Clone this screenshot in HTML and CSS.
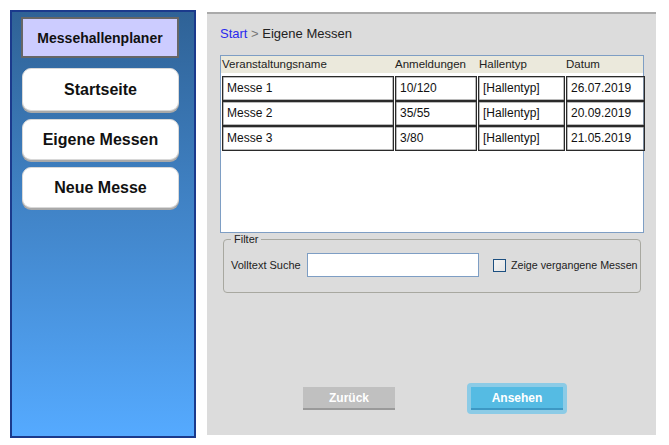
FILE: index.html
```html
<!DOCTYPE html>
<html lang="de">
<head>
<meta charset="utf-8">
<title>Messehallenplaner</title>
<link rel="stylesheet" href="styles.css">
</head>
<body>
<div class="app">
  <nav class="sidebar">
    <div class="brand">Messehallenplaner</div>
    <div class="nav-btn nav-first">Startseite</div>
    <div class="nav-btn">Eigene Messen</div>
    <div class="nav-btn">Neue Messe</div>
  </nav>
  <main class="panel">
    <div class="crumbs"><span class="crumb-link">Start</span><span class="crumb-sep"> &gt; </span><span class="crumb-cur">Eigene Messen</span></div>
    <div class="table">
      <div class="thead">
        <div class="th">Veranstaltungsname</div>
        <div class="th">Anmeldungen</div>
        <div class="th">Hallentyp</div>
        <div class="th">Datum</div>
      </div>
      <div class="tbody">
        <div class="td">Messe 1</div><div class="td">10/120</div><div class="td">[Hallentyp]</div><div class="td">26.07.2019</div>
        <div class="td">Messe 2</div><div class="td">35/55</div><div class="td">[Hallentyp]</div><div class="td">20.09.2019</div>
        <div class="td">Messe 3</div><div class="td">3/80</div><div class="td">[Hallentyp]</div><div class="td">21.05.2019</div>
      </div>
    </div>
    <fieldset class="filter">
      <legend class="filter-legend">Filter</legend>
      <div class="filter-row">
        <span class="filter-label">Volltext Suche</span>
        <span class="search"></span>
        <span class="check"></span>
        <span class="check-label">Zeige vergangene Messen</span>
      </div>
    </fieldset>
    <div class="actions">
      <div class="btn btn-back">Zurück</div>
      <div class="btn-glow"><div class="btn btn-view">Ansehen</div></div>
    </div>
  </main>
</div>
</body>
</html>
```
FILE: styles.css
```css
html, body {
  margin: 0;
  padding: 0;
  background: #ffffff;
}
body {
  font-family: "Liberation Sans", Arial, sans-serif;
}
.app {
  display: flex;
  align-items: flex-start;
  padding: 10px 0 0 10px;
}
.sidebar {
  box-sizing: border-box;
  width: 186px;
  height: 428px;
  border: 2px solid #1b3a8c;
  background: linear-gradient(#2f6296, #55aaff);
  padding: 5px 0 0 9px;
  display: flex;
  flex-direction: column;
}
.brand {
  box-sizing: border-box;
  width: 158px;
  height: 41px;
  background: #ccccff;
  border: 2px solid #666666;
  display: flex;
  align-items: center;
  justify-content: center;
  font-weight: bold;
  font-size: 14px;
  color: #111;
  margin-bottom: 10px;
}
.nav-btn {
  box-sizing: border-box;
  width: 157px;
  height: 41px;
  margin-left: 1px;
  margin-bottom: 7px;
  background: #ffffff;
  border-radius: 9px;
  border: 1px solid #d8d8d8;
  box-shadow: 0 2px 0 #a9a9a9;
  display: flex;
  align-items: center;
  justify-content: center;
  font-weight: bold;
  font-size: 16px;
  color: #111;
}
.nav-first {
  height: 43px;
  margin-bottom: 8px;
}
.panel {
  box-sizing: border-box;
  margin-left: 11px;
  margin-top: 2px;
  width: 449px;
  height: 423px;
  background: #dcdcdc;
  border-top: 2px solid #aaaaaa;
  padding: 12px 0 0 13px;
  display: flex;
  flex-direction: column;
}
.crumbs {
  font-size: 13px;
  line-height: 16px;
  color: #222;
}
.crumb-link { color: #2a2aee; }
.crumb-sep { color: #777; }
.table {
  box-sizing: border-box;
  margin-top: 13px;
  width: 424px;
  height: 178px;
  background: #ffffff;
  border: 1px solid #7e9ec4;
}
.thead {
  display: grid;
  grid-template-columns: 173px 84px 87px 78px;
  height: 17px;
  background: #ebe9dc;
  font-size: 11.5px;
  line-height: 16px;
  color: #222;
}
.th {
  padding-left: 1px;
  white-space: nowrap;
}
.tbody {
  display: grid;
  grid-template-columns: 172px 82px 87px 79px;
  grid-auto-rows: 25px;
  column-gap: 1px;
  margin-top: 3px;
  padding-left: 1px;
}
.td {
  box-sizing: border-box;
  border: 1px solid #2a2a2a;
  box-shadow: inset 0 0 0 0.5px #777;
  font-size: 12px;
  line-height: 23px;
  padding-left: 4px;
  color: #111;
  white-space: nowrap;
}
.filter {
  box-sizing: border-box;
  margin: 0 0 0 3px;
  width: 418px;
  height: 60px;
  border: 1px solid #a8a8a0;
  border-radius: 4px;
  padding: 0 0 0 7px;
  min-width: 0;
}
.filter-legend {
  font-size: 11px;
  color: #222;
  padding: 0 3px;
  margin-left: 0;
  line-height: 12px;
}
.filter-row {
  display: flex;
  align-items: center;
  margin-top: 8px;
  font-size: 11px;
  color: #222;
  white-space: nowrap;
}
.filter-label {
  width: 76px;
  flex-shrink: 0;
}
.search {
  box-sizing: border-box;
  flex-shrink: 0;
  width: 172px;
  height: 24px;
  background: #ffffff;
  border: 1px solid #7e9ec4;
}
.check {
  box-sizing: border-box;
  flex-shrink: 0;
  width: 13px;
  height: 13px;
  margin-left: 14px;
  border: 1px solid #1c4f80;
  background: linear-gradient(135deg, #f4f4f4, #e4e4e4);
}
.check-label {
  margin-left: 5px;
  white-space: nowrap;
  font-size: 10.7px;
}
.actions {
  display: flex;
  align-items: center;
  margin-top: 90px;
  padding-left: 83px;
}
.btn {
  box-sizing: border-box;
  width: 92px;
  height: 23px;
  display: flex;
  align-items: center;
  justify-content: center;
  font-weight: bold;
  font-size: 12px;
  color: #ffffff;
}
.btn-back {
  background: #c0c0c0;
  border-bottom: 2px solid #9a9a9a;
}
.btn-glow {
  margin-left: 72px;
  padding: 4px;
  background: #8ccbe6;
  border-radius: 4px;
}
.btn-view {
  background: #55bbe3;
  border-bottom: 2px solid #3d98c4;
}
```
